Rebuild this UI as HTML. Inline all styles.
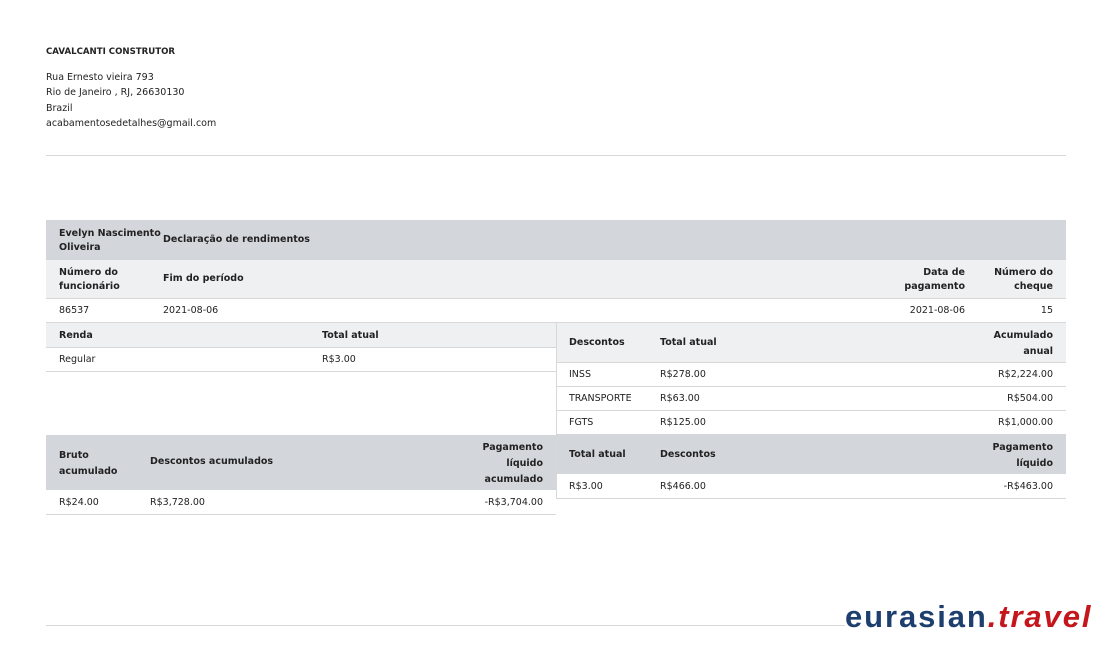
<!DOCTYPE html><html><head><meta charset="utf-8"><style>
body{margin:0;width:1110px;height:647px;background:#fff;position:relative;font-family:"DejaVu Sans","Liberation Sans",sans-serif;color:#222;font-size:9.5px;overflow:hidden}
div{position:absolute}
div:not(.g):not(.l):not(.ln){margin-top:1px}
.b{font-weight:bold}
.r{text-align:right}
.g{background:#d3d6db}.l{background:#eef0f2}
.ln{height:1px;background:#d8d8d8}
</style></head><body>
<div class="b" style="left:46px;top:46px;font-size:8.6px">CAVALCANTI CONSTRUTOR</div>
<div style="left:46px;top:69px;line-height:15.3px">Rua Ernesto vieira 793<br>Rio de Janeiro , RJ, 26630130<br>Brazil<br>acabamentosedetalhes@gmail.com</div>
<div class="ln" style="left:46px;top:155px;width:1020px"></div>

<div class="g" style="left:46px;top:220px;width:1020px;height:40px"></div>
<div class="l" style="left:46px;top:260px;width:1020px;height:38px"></div>
<div class="ln" style="left:46px;top:298px;width:1020px"></div>
<div class="ln" style="left:46px;top:322px;width:1020px"></div>
<div class="b" style="left:59px;top:226px;line-height:14px">Evelyn Nascimento<br>Oliveira</div>
<div class="b" style="left:163px;top:233px">Declaração de rendimentos</div>
<div class="b" style="left:59px;top:265px;line-height:14px">Número do<br>funcionário</div>
<div class="b" style="left:163px;top:272px">Fim do período</div>
<div class="b r" style="left:880px;width:85px;top:265px;line-height:14px">Data de<br>pagamento</div>
<div class="b r" style="left:980px;width:73px;top:265px;line-height:14px">Número do<br>cheque</div>
<div style="left:59px;top:304px">86537</div>
<div style="left:163px;top:304px">2021-08-06</div>
<div class="r" style="left:880px;width:85px;top:304px">2021-08-06</div>
<div class="r" style="left:980px;width:73px;top:304px">15</div>

<div class="l" style="left:46px;top:323px;width:510px;height:24px"></div>
<div class="ln" style="left:46px;top:347px;width:510px"></div>
<div class="ln" style="left:46px;top:371px;width:510px"></div>
<div class="b" style="left:59px;top:329px">Renda</div>
<div class="b" style="left:322px;top:329px">Total atual</div>
<div style="left:59px;top:353px">Regular</div>
<div style="left:322px;top:353px">R$3.00</div>
<div class="g" style="left:46px;top:435px;width:510px;height:55px"></div>
<div class="ln" style="left:46px;top:514px;width:510px"></div>
<div class="b" style="left:59px;top:447px;line-height:16px">Bruto<br>acumulado</div>
<div class="b" style="left:150px;top:455px">Descontos acumulados</div>
<div class="b r" style="left:440px;width:103px;top:439px;line-height:16px">Pagamento<br>líquido<br>acumulado</div>
<div style="left:59px;top:496px">R$24.00</div>
<div style="left:150px;top:496px">R$3,728.00</div>
<div class="r" style="left:440px;width:103px;top:496px">-R$3,704.00</div>
<div style="left:556px;top:323px;width:1px;height:176px;background:#d8d8d8;margin-top:0"></div>

<div class="l" style="left:557px;top:323px;width:509px;height:39px"></div>
<div class="ln" style="left:557px;top:362px;width:509px"></div>
<div class="ln" style="left:557px;top:386px;width:509px"></div>
<div class="ln" style="left:557px;top:410px;width:509px"></div>
<div class="b" style="left:569px;top:336px">Descontos</div>
<div class="b" style="left:660px;top:336px">Total atual</div>
<div class="b r" style="left:950px;width:103px;top:327px;line-height:16px">Acumulado<br>anual</div>
<div style="left:569px;top:368px">INSS</div><div style="left:660px;top:368px">R$278.00</div><div class="r" style="left:950px;width:103px;top:368px">R$2,224.00</div>
<div style="left:569px;top:392px">TRANSPORTE</div><div style="left:660px;top:392px">R$63.00</div><div class="r" style="left:950px;width:103px;top:392px">R$504.00</div>
<div style="left:569px;top:416px">FGTS</div><div style="left:660px;top:416px">R$125.00</div><div class="r" style="left:950px;width:103px;top:416px">R$1,000.00</div>
<div class="g" style="left:557px;top:434px;width:509px;height:40px"></div>
<div class="ln" style="left:557px;top:498px;width:509px"></div>
<div class="b" style="left:569px;top:448px">Total atual</div>
<div class="b" style="left:660px;top:448px">Descontos</div>
<div class="b r" style="left:950px;width:103px;top:439px;line-height:16px">Pagamento<br>líquido</div>
<div style="left:569px;top:480px">R$3.00</div><div style="left:660px;top:480px">R$466.00</div><div class="r" style="left:950px;width:103px;top:480px">-R$463.00</div>

<div class="ln" style="left:46px;top:625px;width:1020px"></div>
<div style="left:845px;top:598px;font-family:'Liberation Sans',sans-serif;font-weight:bold;font-size:31px;letter-spacing:1.9px;background:#fff;line-height:38px;margin-top:0"><span style="color:#1e3f6e">eurasian</span><span style="color:#c4161c;font-style:italic">.travel</span></div>
</body></html>
